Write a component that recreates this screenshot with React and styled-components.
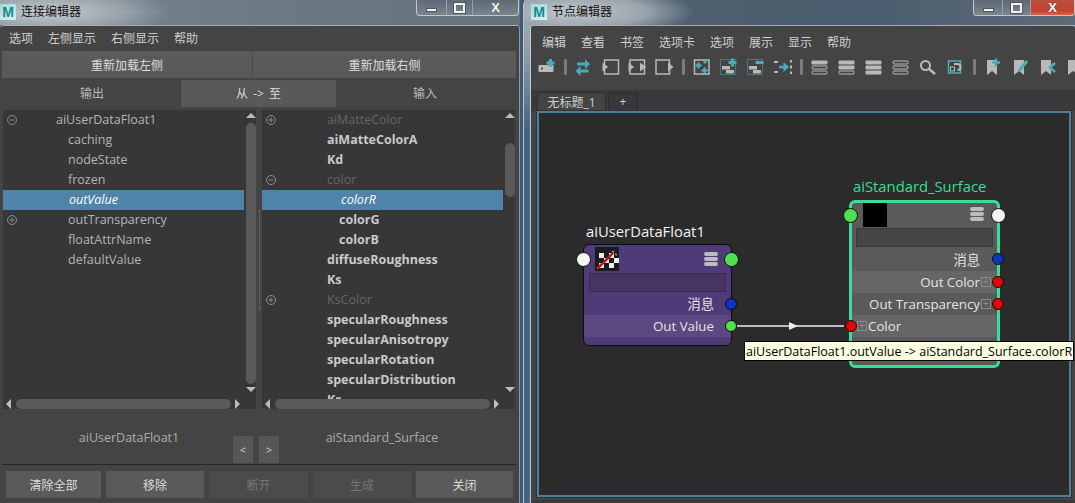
import React from "react"
import styled, { createGlobalStyle } from "styled-components"

const FONT = `"Open Sans", "Noto Sans CJK SC", sans-serif`
const GREY = "#b9b9b9"
const TEAL = "#45aebb"

const Global = createGlobalStyle`
	html, body { margin: 0; padding: 0; overflow: hidden; }
	* { box-sizing: border-box; }
`

const Desktop = styled.div`
	width: 1075px;
	height: 503px;
	display: flex;
	overflow: hidden;
	background: #3f5a76;
	font-family: ${FONT};
	font-size: 12.5px;
	color: #c4c4c4;
`

const LeftWindow = styled.div`
	width: 520px;
	display: flex;
	flex-direction: column;
	flex: none;
`

const RightWindow = styled.div`
	margin-left: 3px;
	flex: 1;
	min-width: 0;
	display: flex;
	flex-direction: column;
	padding-left: 6px;
	border-left: 1px solid #b9c2c9;
	background: linear-gradient(180deg, #aab2b8 0, #8b99a5 60px, #446583 130px, #446583 100%);
	border-top-left-radius: 5px;
`

const TitleBar = styled.div`
	height: 25px;
	flex: none;
	display: flex;
	align-items: flex-start;
	margin-left: ${(p) => (p.$inset ? "-6px" : "0")};
	padding-left: ${(p) => (p.$inset ? "7px" : "0")};
	background: ${(p) =>
		p.$inset
			? "radial-gradient(ellipse 120px 26px at 50px 12px, #c2c8cc 0, #9aa4ac 60%, transparent 100%), linear-gradient(90deg, #7d8993 0, #52616f 22%, #4a5c6e 60%, #5d6b78 100%)"
			: "radial-gradient(ellipse 120px 26px at 50px 12px, #c6ccd0 0, #98a3ab 60%, transparent 100%), linear-gradient(90deg, #7b8791 0, #6a7783 60%, #66737f 100%)"};
`

const AppLogo = styled.span`
	width: 16px;
	height: 16px;
	margin-top: 4px;
	display: flex;
	align-items: center;
	justify-content: center;
	background: linear-gradient(160deg, #9fdcdc, #d6eeee);
	color: #158a8e;
	font: 700 14px "Liberation Sans", sans-serif;
`

const TitleText = styled.span`
	margin: 3px 0 0 5px;
	color: #111;
	font-size: 12px;
	line-height: 17px;
`

const WinButtons = styled.div`
	margin-left: auto;
	margin-right: ${(p) => p.$right}px;
	height: 16px;
	display: flex;
	border: 1px solid #c0c6ca;
	border-top: 0;
	border-radius: 0 0 4px 4px;
	overflow: hidden;
	background: linear-gradient(180deg, #5d6a75, #7a858e);
`

const WinButton = styled.div`
	width: ${(p) => p.$w}px;
	display: flex;
	align-items: center;
	justify-content: center;
	border-left: ${(p) => (p.$first ? "0" : "1px solid #9ba3a9")};
	background: ${(p) => (p.$red ? "linear-gradient(180deg, #b8503f, #c8402c 70%, #d9604a)" : "transparent")};
`

const WinGlyph = styled.span`
	display: block;
	${(p) => p.$kind === "min" && "width: 11px; height: 4px; margin-top: 5px; background: #f2f2f2; border: 1px solid #555;"}
	${(p) => p.$kind === "max" && "width: 11px; height: 10px; border: 2px solid #f2f2f2; outline: 1px solid #555;"}
`

const CloseGlyph = styled.span`
	color: #fff;
	font: 700 13px/14px "Liberation Sans", sans-serif;
	text-shadow: 0 0 1px #333;
`

const Body = styled.div`
	flex: 1;
	min-height: 0;
	display: flex;
	flex-direction: column;
	background: #444;
	border-top: 1px solid #a5adb3;
	border-right: ${(p) => (p.$edge ? "1px solid #8f979d" : "0")};
	border-left: ${(p) => (p.$inner ? "1px solid #c5ccd1" : "0")};
	border-radius: 3px 3px 0 0;
`

const Menu = styled.div`
	height: ${(p) => p.$h}px;
	flex: none;
	display: flex;
	align-items: center;
	padding: 0 0 ${(p) => p.$lift || 0}px ${(p) => p.$pad}px;
	gap: 15px;
	font-size: 12px;
	color: #cfcfcf;
`

const ReloadRow = styled.div`
	margin-left: 2px;
	width: 514px;
	height: 27px;
	flex: none;
	display: grid;
	grid-template-columns: 251px 263px;
	font-size: 12px;
`

const FlatButton = styled.div`
	display: flex;
	align-items: center;
	justify-content: center;
	font-size: 12px;
	background: ${(p) => (p.$off ? "#4b4b4b" : "#5a5a5a")};
	color: ${(p) => (p.$off ? "#757575" : "#dcdcdc")};
	border-right: ${(p) => (p.$split ? "1px solid #4a4a4a" : "0")};
`

const TabRow = styled.div`
	margin: 2px 0 3px 3px;
	height: 27px;
	flex: none;
	display: grid;
	grid-template-columns: 178px 155px 178px;
	font-size: 12px;
`

const ModeTab = styled.div`
	display: flex;
	align-items: center;
	justify-content: center;
	padding-bottom: 1px;
	word-spacing: 2px;
	color: ${(p) => (p.$on ? "#dcdcdc" : "#b9b9b9")};
	background: ${(p) => (p.$on ? "#585858" : "transparent")};
`

const Panes = styled.div`
	margin-left: 3px;
	height: 299px;
	flex: none;
	display: flex;
`

const Pane = styled.div`
	width: 253px;
	display: flex;
	flex-direction: column;
	background: #373737;
`

const Sash = styled.div`
	width: 6px;
	display: flex;
	align-items: center;
	justify-content: center;
	&::before {
		content: "";
		height: 100px;
		border-left: 1px dotted #7b7b7b;
	}
`

const PaneMain = styled.div`
	flex: 1;
	min-height: 0;
	display: flex;
`

const Rows = styled.div`
	width: 241px;
	margin-right: 2px;
	overflow: hidden;
`

const Row = styled.div`
	height: 20px;
	display: flex;
	align-items: center;
	padding-bottom: 1px;
	white-space: nowrap;
	background: ${(p) => (p.$active ? "#5083a8" : "transparent")};
	color: ${(p) => (p.$active ? "#fff" : p.$dim ? "#666" : p.$bold ? "#c9c9c9" : "#b4b4b4")};
	font-weight: ${(p) => (p.$bold && !p.$active ? 700 : 400)};
	font-style: ${(p) => (p.$active ? "italic" : "normal")};
`

const ToggleSlot = styled.span`
	width: 18px;
	flex: none;
	display: flex;
	justify-content: center;
`

const RowName = styled.span`
	margin-left: ${(p) => p.$indent - 18}px;
`

const VScroll = styled.div`
	width: 10px;
	flex: none;
	display: flex;
	flex-direction: column;
	align-items: center;
	padding: 3px 0 7px;
`

const Thumb = styled.div`
	width: 10px;
	height: ${(p) => p.$len}px;
	margin-top: ${(p) => p.$top}px;
	border-radius: 5px;
	background: #5a5a5a;
`

const ArrowUp = styled.i`
	display: block;
	flex: none;
	border: 5px solid transparent;
	border-top: 0;
	border-bottom: 5px solid #bdbdbd;
`

const ArrowDown = styled.i`
	display: block;
	flex: none;
	margin-top: auto;
	border: 5px solid transparent;
	border-bottom: 0;
	border-top: 5px solid #bdbdbd;
`

const HScroll = styled.div`
	height: 10px;
	flex: none;
	display: flex;
	align-items: center;
	padding-left: 3px;
`

const ArrowLeft = styled.i`
	display: block;
	border: 5px solid transparent;
	border-left: 0;
	border-right: 5px solid #bdbdbd;
`

const ArrowRight = styled.i`
	display: block;
	margin-left: 4px;
	border: 5px solid transparent;
	border-right: 0;
	border-left: 5px solid #bdbdbd;
`

const HThumb = styled.div`
	width: 215px;
	height: 10px;
	margin-left: 5px;
	border-radius: 5px;
	background: #5a5a5a;
`

const InfoRow = styled.div`
	margin-left: 3px;
	width: 513px;
	height: 56px;
	flex: none;
	display: flex;
	align-items: flex-end;
	padding-bottom: 1px;
	border-bottom: 1px solid #262626;
`

const NodeLabel = styled.div`
	align-self: flex-start;
	margin-top: 20px;
	width: ${(p) => p.$w}px;
	padding-left: ${(p) => p.$pad}px;
	text-align: center;
	color: #adadad;
	line-height: 18px;
`

const NudgeButton = styled.div`
	width: 20px;
	height: 27px;
	margin-left: ${(p) => p.$gap}px;
	display: flex;
	align-items: center;
	justify-content: center;
	background: #575757;
	color: #d0d0d0;
	font-size: 11px;
`

const Footer = styled.div`
	margin: 6px 0 0 6px;
	height: 27px;
	flex: none;
	display: grid;
	grid-template-columns: 95px 98px 99px 98px 97px;
	column-gap: 5px;
`

const Toolbar = styled.div`
	height: 24px;
	margin: -2px 0 0 2px;
	flex: none;
	display: flex;
	align-items: center;
	overflow: hidden;
`

const ToolIcon = styled.svg`
	width: 27px;
	height: 24px;
	flex: none;
`

const ToolSep = styled.span`
	width: ${(p) => (p.$wide ? 12 : 10)}px;
	flex: none;
	display: flex;
	justify-content: center;
	&::before {
		content: "";
		width: 3px;
		height: 16px;
		border-radius: 1px;
		background: #7c7c7c;
	}
`

const TabStrip = styled.div`
	margin-top: 11px;
	height: 21px;
	flex: none;
	display: flex;
	align-items: flex-end;
	gap: 2px;
	padding-left: 6px;
	background: #3a3a3a;
`

const DocTab = styled.div`
	width: ${(p) => p.$w}px;
	height: 19px;
	display: flex;
	align-items: center;
	justify-content: center;
	padding-bottom: 1px;
	background: ${(p) => (p.$on ? "#444" : "#383838")};
	border: 1px solid #2e2e2e;
	border-bottom: 0;
	border-radius: 3px 3px 0 0;
	color: #cfcfcf;
	font-size: 12px;
`

const CanvasFrame = styled.div`
	flex: 1;
	display: flex;
	padding: 0 4px 6px 6px;
	background: #444;
	box-shadow: inset 0 -3px 0 #3a3a3a;
`

const Canvas = styled.div`
	position: relative;
	flex: 1;
	background: #2b2b2b;
	border: 2px solid #4d7d9f;
	outline: 1px solid #333;
`

const Node = styled.div`
	position: absolute;
	left: ${(p) => p.$x}px;
	top: ${(p) => p.$y}px;
	width: ${(p) => p.$w}px;
	height: ${(p) => p.$h}px;
	padding-bottom: 8px;
	border-radius: 6px;
	border: ${(p) => (p.$selected ? "3px solid #3ddc97" : "1.5px solid #0d0d0d")};
	background: ${(p) => p.$bg};
`

const NodeTitle = styled.div`
	position: absolute;
	left: ${(p) => p.$x}px;
	bottom: 100%;
	margin-bottom: ${(p) => p.$lift}px;
	font-size: 14.8px;
	line-height: 20px;
	white-space: nowrap;
	color: ${(p) => p.$color};
`

const NodeHead = styled.div`
	height: ${(p) => p.$h}px;
	position: relative;
	display: flex;
	justify-content: space-between;
	padding: ${(p) => p.$pad};
`

const Swatch = styled.div`
	width: 24px;
	height: 24px;
	background: #000;
`

const StackGlyph = styled.div`
	width: 14px;
	display: flex;
	flex-direction: column;
	gap: 1px;
	margin-top: ${(p) => p.$top}px;
	& > i {
		display: block;
		height: 4px;
		border-radius: 2px;
		background: #bcbcbc;
	}
`

const NameBar = styled.div`
	height: 19px;
	margin: 0 ${(p) => p.$inset}px;
	background: ${(p) => p.$bg};
	border: 1px solid rgba(0, 0, 0, 0.18);
`

const AttrRow = styled.div`
	position: relative;
	height: ${(p) => p.$h || 22}px;
	display: flex;
	align-items: center;
	justify-content: ${(p) => (p.$left ? "flex-start" : "flex-end")};
	padding: ${(p) => p.$pad};
	gap: 1px;
	color: #e3e3e3;
	font-size: 13.3px;
	background: ${(p) => (p.$alt ? "rgba(255, 255, 255, 0.075)" : "transparent")};
	white-space: nowrap;
`

const Port = styled.span`
	position: absolute;
	top: 50%;
	${(p) => (p.$side === "left" ? "left" : "right")}: ${(p) => p.$off}px;
	width: ${(p) => p.$d}px;
	height: ${(p) => p.$d}px;
	margin-top: ${(p) => -p.$d / 2}px;
	border-radius: 50%;
	background: ${(p) => p.$color};
	border: 1.5px solid #0c0c0c;
`

const Expand = styled.span`
	width: 10px;
	height: 10px;
	flex: none;
	border: 1px solid #8c8c8c;
	color: #8c8c8c;
	display: flex;
	align-items: center;
	justify-content: center;
	font: 10px/8px "Liberation Sans", sans-serif;
`

const Wire = styled.svg`
	position: absolute;
	left: 197px;
	top: 207px;
`

const Tooltip = styled.div`
	position: absolute;
	left: 205px;
	top: 228px;
	width: 330px;
	height: 20px;
	padding-left: 1px;
	display: flex;
	align-items: center;
	background: #ffffe1;
	border: 1px solid #000;
	color: #000;
	font-size: 12.5px;
	white-space: nowrap;
	z-index: 3;
`

function Toggle({ open }) {
	return (
		<svg width='12' height='12' viewBox='0 0 12 12' fill='none' stroke='#8c8c8c' strokeWidth='1'>
			<circle cx='6' cy='6' r='4.5' />
			<path d='M3.5 6h5' />
			{!open && <path d='M6 3.5v5' />}
		</svg>
	)
}

function ListPane({ rows, thumbTop, thumbLen }) {
	return (
		<Pane>
			<PaneMain>
				<Rows>
					{rows.map((r) => (
						<Row key={r.name} $active={r.active} $dim={r.dim} $bold={r.bold}>
							<ToggleSlot>{r.toggle && <Toggle open={r.toggle === "open"} />}</ToggleSlot>
							<RowName $indent={r.indent}>{r.name}</RowName>
						</Row>
					))}
				</Rows>
				<VScroll>
					<ArrowUp />
					<Thumb $top={thumbTop} $len={thumbLen} />
					<ArrowDown />
				</VScroll>
			</PaneMain>
			<HScroll>
				<ArrowLeft />
				<HThumb />
				<ArrowRight />
			</HScroll>
		</Pane>
	)
}

const leftRows = [
	{ name: "aiUserDataFloat1", indent: 53, toggle: "open" },
	{ name: "caching", indent: 65 },
	{ name: "nodeState", indent: 65 },
	{ name: "frozen", indent: 65 },
	{ name: "outValue", indent: 66, active: true },
	{ name: "outTransparency", indent: 65, toggle: "closed" },
	{ name: "floatAttrName", indent: 65 },
	{ name: "defaultValue", indent: 65 },
]

const rightRows = [
	{ name: "aiMatteColor", indent: 65, toggle: "closed", dim: true },
	{ name: "aiMatteColorA", indent: 65, bold: true },
	{ name: "Kd", indent: 65, bold: true },
	{ name: "color", indent: 65, toggle: "open", dim: true },
	{ name: "colorR", indent: 79, active: true },
	{ name: "colorG", indent: 77, bold: true },
	{ name: "colorB", indent: 77, bold: true },
	{ name: "diffuseRoughness", indent: 65, bold: true },
	{ name: "Ks", indent: 65, bold: true },
	{ name: "KsColor", indent: 65, toggle: "closed", dim: true },
	{ name: "specularRoughness", indent: 65, bold: true },
	{ name: "specularAnisotropy", indent: 65, bold: true },
	{ name: "specularRotation", indent: 65, bold: true },
	{ name: "specularDistribution", indent: 65, bold: true },
	{ name: "Kr", indent: 65, bold: true },
]

function Stack({ fills }) {
	return (
		<ToolIcon viewBox='0 0 27 24'>
			{fills.map((f, i) => (
				<rect
					key={i}
					x={f ? 5.5 : 6}
					y={(f ? 5.5 : 6) + i * 5}
					width={f ? 16 : 15}
					height={f ? 4 : 3}
					rx='1'
					fill={f ? GREY : "none"}
					stroke={GREY}
					strokeWidth={f ? 0 : 1}
				/>
			))}
		</ToolIcon>
	)
}

function Sparkle({ x, y, r }) {
	return <path d={`M${x} ${y - r}L${x + r * 0.35} ${y - r * 0.35}L${x + r} ${y}L${x + r * 0.35} ${y + r * 0.35}L${x} ${y + r}L${x - r * 0.35} ${y + r * 0.35}L${x - r} ${y}L${x - r * 0.35} ${y - r * 0.35}Z`} fill={TEAL} />
}

function DottedFrame({ children }) {
	return (
		<ToolIcon viewBox='0 0 27 24'>
			<rect x='5.5' y='4.5' width='15' height='15' fill='none' stroke={TEAL} strokeDasharray='1 1' />
			<rect x='7' y='11' width='8' height='3.5' fill={GREY} />
			<rect x='11' y='15' width='8' height='3.5' fill={GREY} />
			{children}
		</ToolIcon>
	)
}

function Bookmark({ children }) {
	return (
		<ToolIcon viewBox='0 0 27 24'>
			<path d='M7 5h10v15l-5-4-5 4z' fill={GREY} />
			{children}
		</ToolIcon>
	)
}

function NodeTools() {
	const box = { fill: "none", stroke: GREY, strokeWidth: 1.5 }
	return (
		<Toolbar>
			<ToolIcon viewBox='0 0 27 24'>
				<rect x='5.5' y='10' width='15' height='7' rx='1' fill={GREY} />
				<circle cx='9' cy='13.5' r='1' fill='#333' />
				<path d='M17.5 4v8M13.5 8h8' stroke={TEAL} strokeWidth='3' />
			</ToolIcon>
			<ToolSep />
			<ToolIcon viewBox='0 0 27 24'>
				<path d='M7 7.5h8V4l5 5-5 5v-3.5H7z' fill={TEAL} />
				<path d='M18.5 14.5h-8V11l-5 5 5 5v-3.5h8z' fill={TEAL} />
			</ToolIcon>
			<ToolIcon viewBox='0 0 27 24'>
				<rect x='7.5' y='5' width='14' height='14' {...box} />
				<path d='M5.5 7.5l5.5 4.5-5.5 4.5z' fill={GREY} />
			</ToolIcon>
			<ToolIcon viewBox='0 0 27 24'>
				<rect x='6' y='5' width='14.5' height='14' {...box} />
				<path d='M4.5 7.5l5.5 4.5-5.5 4.5zM16 7.5l6 4.5-6 4.5z' fill={GREY} />
			</ToolIcon>
			<ToolIcon viewBox='0 0 27 24'>
				<rect x='5' y='5' width='13.5' height='14' {...box} />
				<path d='M17 7.5l5.5 4.5-5.5 4.5z' fill={GREY} />
			</ToolIcon>
			<ToolSep />
			<ToolIcon viewBox='0 0 27 24'>
				<rect x='6.5' y='5' width='14.5' height='14' {...box} />
				<Sparkle x={10.5} y={10.5} r={4} />
				<Sparkle x={16.5} y={15.5} r={4} />
				<Sparkle x={17} y={7} r={2.5} />
			</ToolIcon>
			<DottedFrame>
				<path d='M17.5 3.5v8M13.5 7.5h8' stroke={TEAL} strokeWidth='3' />
			</DottedFrame>
			<DottedFrame>
				<path d='M13.5 7.5h8' stroke={TEAL} strokeWidth='3' />
			</DottedFrame>
			<ToolIcon viewBox='0 0 27 24'>
				<path d='M5 7h4M5 17h4M22 5v2.5M22 10.5v3M22 16.5v2.5' stroke={GREY} strokeWidth='2' />
				<path d='M10 12h6' stroke={TEAL} strokeWidth='2.5' />
				<path d='M14.5 7l5.5 5-5.5 5z' fill={TEAL} />
			</ToolIcon>
			<ToolSep />
			<Stack fills={[true, false, false]} />
			<Stack fills={[true, true, false]} />
			<Stack fills={[true, true, true]} />
			<Stack fills={[false, false, false]} />
			<ToolIcon viewBox='0 0 27 24'>
				<circle cx='11.5' cy='10.5' r='4.5' fill='none' stroke={GREY} strokeWidth='2' />
				<path d='M15 14l6 5' stroke={GREY} strokeWidth='2.5' />
			</ToolIcon>
			<ToolIcon viewBox='0 0 27 24'>
				<rect x='7.5' y='6' width='12' height='12' fill='none' stroke={TEAL} strokeWidth='1.5' />
				<path d='M13 9h3.5a2.5 2.5 0 0 1 0 6' fill='none' stroke={GREY} strokeWidth='2' />
				<rect x='9.5' y='12' width='4' height='4' fill='#444' stroke={GREY} />
			</ToolIcon>
			<ToolSep $wide />
			<Bookmark>
				<path d='M16 3.5v8M12 7.5h8' stroke={TEAL} strokeWidth='2.5' />
			</Bookmark>
			<Bookmark>
				<path d='M12 16l8-10' stroke={TEAL} strokeWidth='3' />
			</Bookmark>
			<Bookmark>
				<path d='M21 8l-5 4.5 5 4.5' fill='none' stroke={TEAL} strokeWidth='2.5' />
			</Bookmark>
			<Bookmark />
		</Toolbar>
	)
}

function CheckerIcon() {
	const cells = [
		[2, 6], [12, 6], [7, 11], [17, 11], [2, 16], [12, 16],
	]
	return (
		<svg width='24' height='24' viewBox='0 0 24 24'>
			<rect width='24' height='24' fill='#1b1b1b' />
			{cells.map(([x, y]) => (
				<rect key={`${x}-${y}`} x={x + 2} y={y} width='5' height='5' fill='#eee' />
			))}
			<path d='M2 22L18 6' stroke='#b32020' strokeWidth='2.5' />
			<path d='M17 4l2 1M20 7l2 1' stroke='#888' strokeWidth='1.5' />
		</svg>
	)
}

function App() {
	return (
		<Desktop>
			<Global />
			<LeftWindow>
				<TitleBar>
					<AppLogo>M</AppLogo>
					<TitleText>连接编辑器</TitleText>
					<WinButtons $right={1}>
						<WinButton $first $w={29}>
							<WinGlyph $kind='min' />
						</WinButton>
						<WinButton $w={26}>
							<WinGlyph $kind='max' />
						</WinButton>
						<WinButton $w={46}>
							<CloseGlyph>X</CloseGlyph>
						</WinButton>
					</WinButtons>
				</TitleBar>
				<Body $edge>
					<Menu $h={25} $pad={9} $lift={2}>
						<span>选项</span>
						<span>左侧显示</span>
						<span>右侧显示</span>
						<span>帮助</span>
					</Menu>
					<ReloadRow>
						<FlatButton $split>重新加载左侧</FlatButton>
						<FlatButton>重新加载右侧</FlatButton>
					</ReloadRow>
					<TabRow>
						<ModeTab>输出</ModeTab>
						<ModeTab $on>从 -&gt; 至</ModeTab>
						<ModeTab>输入</ModeTab>
					</TabRow>
					<Panes>
						<ListPane rows={leftRows} thumbTop={5} thumbLen={261} />
						<Sash />
						<ListPane rows={rightRows} thumbTop={25} thumbLen={54} />
					</Panes>
					<InfoRow>
						<NodeLabel $w={230} $pad={22}>aiUserDataFloat1</NodeLabel>
						<NudgeButton $gap={0}>&lt;</NudgeButton>
						<NudgeButton $gap={6}>&gt;</NudgeButton>
						<NodeLabel $w={206}>aiStandard_Surface</NodeLabel>
					</InfoRow>
					<Footer>
						<FlatButton>清除全部</FlatButton>
						<FlatButton>移除</FlatButton>
						<FlatButton $off>断开</FlatButton>
						<FlatButton $off>生成</FlatButton>
						<FlatButton>关闭</FlatButton>
					</Footer>
				</Body>
			</LeftWindow>
			<RightWindow>
				<TitleBar $inset>
					<AppLogo>M</AppLogo>
					<TitleText>节点编辑器</TitleText>
					<WinButtons $right={0}>
						<WinButton $first $w={28}>
							<WinGlyph $kind='min' />
						</WinButton>
						<WinButton $w={28}>
							<WinGlyph $kind='max' />
						</WinButton>
						<WinButton $red $w={44}>
							<CloseGlyph>X</CloseGlyph>
						</WinButton>
					</WinButtons>
				</TitleBar>
				<Body $inner>
					<Menu $h={31} $pad={11}>
						<span>编辑</span>
						<span>查看</span>
						<span>书签</span>
						<span>选项卡</span>
						<span>选项</span>
						<span>展示</span>
						<span>显示</span>
						<span>帮助</span>
					</Menu>
					<NodeTools />
					<TabStrip>
						<DocTab $on $w={69}>无标题_1</DocTab>
						<DocTab $w={30}>+</DocTab>
					</TabStrip>
					<CanvasFrame>
						<Canvas>
							<Wire width='108' height='12' viewBox='0 0 108 12'>
								<path d='M0 6h108' stroke='#eee' strokeWidth='1.5' />
								<path d='M53 2l9 4-9 4z' fill='#eee' />
							</Wire>
							<Node $x={44} $y={131} $w={149} $h={102} $bg='#4f3b78'>
								<NodeTitle $x={2} $lift={4} $color='#f2f2f2'>aiUserDataFloat1</NodeTitle>
								<NodeHead $h={28} $pad='2px 13px 0 11px'>
									<CheckerIcon />
									<StackGlyph $top={5}>
										<i />
										<i />
										<i />
									</StackGlyph>
									<Port $side='left' $off={-8} $d={15} $color='#f5f5f5' />
									<Port $side='right' $off={-8} $d={15} $color='#4fe04f' />
								</NodeHead>
								<NameBar $inset={5} $bg='#463562' />
								<AttrRow $h={23} $pad='0 17px 0 0'>
									消息
									<Port $side='right' $off={-6} $d={12} $color='#0c35c4' />
								</AttrRow>
								<AttrRow $alt $pad='0 17px 0 0'>
									Out Value
									<Port $side='right' $off={-6} $d={12} $color='#4fe04f' />
								</AttrRow>
							</Node>
							<Node $selected $x={310} $y={87} $w={151} $h={168} $bg='#5a5a5a'>
								<NodeTitle $x={1} $lift={7} $color='#3ddc97'>aiStandard_Surface</NodeTitle>
								<NodeHead $h={25} $pad='0 13px 0 11px'>
									<Swatch />
									<StackGlyph $top={4}>
										<i />
										<i />
										<i />
									</StackGlyph>
									<Port $side='left' $off={-9} $d={15} $color='#4fe04f' />
									<Port $side='right' $off={-9} $d={15} $color='#f5f5f5' />
								</NodeHead>
								<NameBar $inset={4} $bg='#454545' />
								<AttrRow $h={24} $pad='0 17px 0 0'>
									消息
									<Port $side='right' $off={-7} $d={12} $color='#0c35c4' />
								</AttrRow>
								<AttrRow $alt $pad='0 6px 0 0'>
									Out Color
									<Expand>+</Expand>
									<Port $side='right' $off={-7} $d={12} $color='#e40000' />
								</AttrRow>
								<AttrRow $pad='0 6px 0 0'>
									Out Transparency
									<Expand>+</Expand>
									<Port $side='right' $off={-7} $d={12} $color='#e40000' />
								</AttrRow>
								<AttrRow $alt $left $pad='0 0 0 5px'>
									<Expand>+</Expand>
									Color
									<Port $side='left' $off={-7} $d={12} $color='#e40000' />
								</AttrRow>
							</Node>
							<Tooltip>aiUserDataFloat1.outValue -&gt; aiStandard_Surface.colorR</Tooltip>
						</Canvas>
					</CanvasFrame>
				</Body>
			</RightWindow>
		</Desktop>
	)
}

export default App
